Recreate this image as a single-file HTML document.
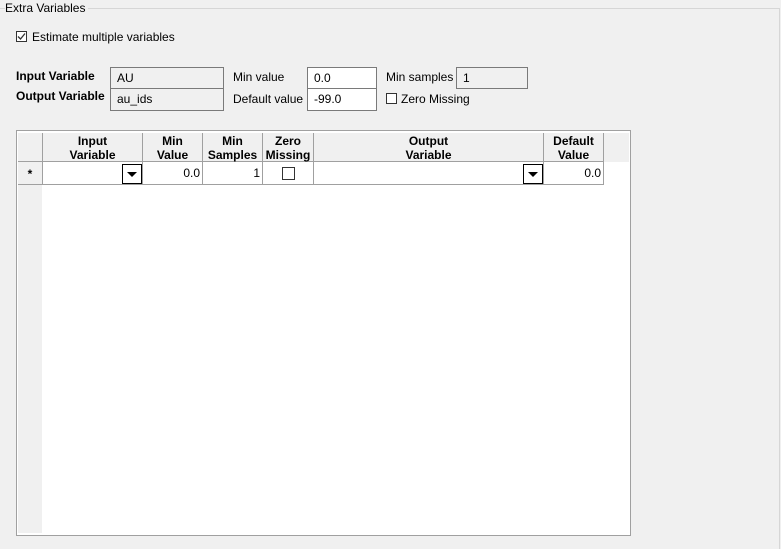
<!DOCTYPE html><html><head><style>
body{margin:0;width:781px;height:546px;background:#f0f0f0;font-family:"Liberation Sans",sans-serif;font-size:12px;color:#000;position:relative;overflow:hidden}
.a{position:absolute}
.lbl{position:absolute;font-size:12px;white-space:nowrap}
.b{font-weight:bold}
.tb{position:absolute;box-sizing:border-box;border:1px solid #7a7a7a;height:23px;padding:3px 0 0 6px;background:#f0f0f0}
.tw{background:#fff}
.cb{position:absolute;width:11px;height:11px;border:1px solid #333;background:#fff;box-sizing:border-box}
.h{position:absolute;top:133px;height:29px;box-sizing:border-box;border-right:1px solid #a0a0a0;border-bottom:1px solid #a0a0a0;font-weight:bold;text-align:center;line-height:14px;padding-top:1px;background:#f0f0f0}
.c{position:absolute;top:162px;height:23px;box-sizing:border-box;border-right:1px solid #a0a0a0;border-bottom:1px solid #a0a0a0;background:#fff;text-align:right;padding:4px 2px 0 0}
.dd{position:absolute;width:20px;height:20px;box-sizing:border-box;border:1px solid #000;background:#fff}
.dd:after{content:"";position:absolute;left:4px;top:7px;border-left:5px solid transparent;border-right:5px solid transparent;border-top:5px solid #000}
</style></head><body>
<div class="a" style="left:0;top:8px;width:779px;height:540px;border-top:1px solid #d6d6d6;border-right:1px solid #d6d6d6"></div>
<div class="lbl" style="left:5px;top:1px;background:#f0f0f0;padding-right:3px">Extra Variables</div>
<div class="cb" style="left:16px;top:31px"><svg width="9" height="9" style="position:absolute;left:0;top:0"><path d="M1 4.5 L3.5 7 L8 1.5" stroke="#333" stroke-width="1.3" fill="none"/></svg></div>
<div class="lbl" style="left:32px;top:30px">Estimate multiple variables</div>
<div class="lbl b" style="left:16px;top:69px">Input Variable</div>
<div class="lbl b" style="left:16px;top:89px">Output Variable</div>
<div class="tb" style="left:110px;top:67px;width:114px">AU</div>
<div class="tb" style="left:110px;top:88px;width:114px">au_ids</div>
<div class="lbl" style="left:233px;top:70px">Min value</div>
<div class="lbl" style="left:233px;top:92px">Default value</div>
<div class="tb tw" style="left:307px;top:67px;width:70px">0.0</div>
<div class="tb tw" style="left:307px;top:88px;width:70px">-99.0</div>
<div class="lbl" style="left:386px;top:70px">Min samples</div>
<div class="tb" style="left:456px;top:67px;width:72px;height:22px">1</div>
<div class="cb" style="left:386px;top:93px"></div>
<div class="lbl" style="left:401px;top:92px">Zero Missing</div>

<div class="a" style="left:16px;top:130px;width:615px;height:406px;box-sizing:border-box;border:1px solid #a0a0a0;background:#fff">
</div>
<div class="a" style="left:18px;top:133px;width:611px;height:29px;background:#f0f0f0"></div>
<div class="a" style="left:18px;top:133px;width:24px;height:400px;background:#f0f0f0"></div>
<div class="h" style="left:18px;width:25px"></div>
<div class="h" style="left:43px;width:100px">Input<br>Variable</div>
<div class="h" style="left:143px;width:60px">Min<br>Value</div>
<div class="h" style="left:203px;width:60px">Min<br>Samples</div>
<div class="h" style="left:263px;width:51px">Zero<br>Missing</div>
<div class="h" style="left:314px;width:230px">Output<br>Variable</div>
<div class="h" style="left:544px;width:60px">Default<br>Value</div>
<div class="c" style="left:18px;width:25px;background:#f0f0f0;text-align:center;padding:5px 0 0 0;font-weight:bold">*</div>
<div class="c" style="left:43px;width:100px"></div><div class="dd" style="left:122px;top:164px"></div>
<div class="c" style="left:143px;width:60px">0.0</div>
<div class="c" style="left:203px;width:60px">1</div>
<div class="c" style="left:263px;width:51px"></div><div class="cb" style="left:282px;top:167px;width:13px;height:13px"></div>
<div class="c" style="left:314px;width:230px"></div><div class="dd" style="left:523px;top:164px"></div>
<div class="c" style="left:544px;width:60px">0.0</div>
</body></html>
